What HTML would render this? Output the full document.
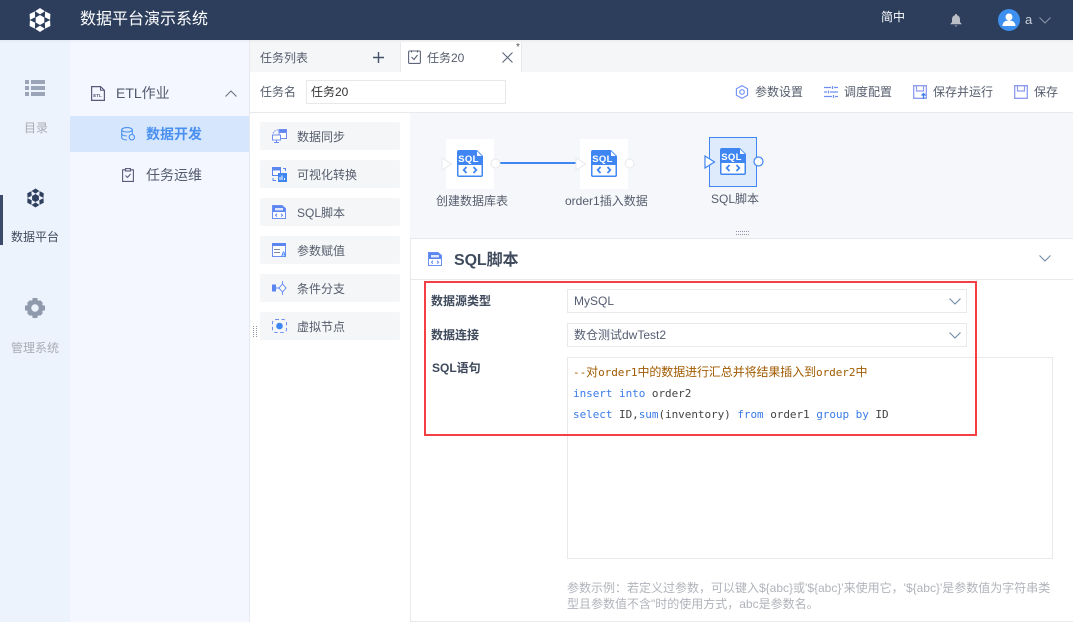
<!DOCTYPE html>
<html lang="zh-CN"><head><meta charset="utf-8"><title>数据平台演示系统</title>
<style>
*{box-sizing:border-box}
html,body{margin:0;padding:0}
body{width:1073px;height:622px;overflow:hidden;position:relative;background:#fff;font:12px "Liberation Sans","Noto Sans CJK SC",sans-serif;color:#555c6c}
.a{position:absolute}
.t{position:absolute;white-space:nowrap;line-height:20px;height:20px}
.item{position:absolute;left:260px;width:140px;height:28px;background:#f5f6f8;border-radius:2px}
.lb{font-weight:bold;color:#3f4a5c}
.sel{position:absolute;left:567px;width:400px;border:1px solid #e8e9eb;background:#fff;color:#555c72;padding-left:6px;line-height:22px}
.code{font-family:"Noto Sans CJK SC",monospace;font-size:12px;line-height:21px;white-space:pre;left:573px;position:absolute;letter-spacing:-.1px}
.code span{font-family:"DejaVu Sans Mono",monospace;font-size:11px;letter-spacing:-.05px}
.c{color:#a05a00}.d span{color:#444}.code span.k{color:#3a7be8}
svg{position:absolute;overflow:visible}
</style></head><body>
<svg width="0" height="0" style="position:absolute"><defs>
<symbol id="sql" viewBox="0 0 26 27">
<path d="M2 0H20L26 6V25a2 2 0 0 1-2 2H2a2 2 0 0 1-2-2V2a2 2 0 0 1 2-2Z" fill="#3f86f2"/>
<path d="M20 1.200V6H24.800Z" fill="#fff"/>
<rect x="1.500" y="15" width="23" height="10.500" fill="#fff"/>
<path d="M9.500 17L6.700 20L9.500 23M16.500 17L19.300 20L16.500 23" fill="none" stroke="#3f86f2" stroke-width="1.800"/>
<text x="11.500" y="12" text-anchor="middle" font-family="Liberation Sans" font-weight="bold" font-size="9.500" letter-spacing=".3" fill="#fff">SQL</text>
</symbol>
<symbol id="sqls" viewBox="0 0 14 14">
<path d="M.5.500H10L13.500 3.500V13.500H.5Z" fill="#fff" stroke="#6b8ff2"/>
<path d="M1 1H10L13 3.500V7H1Z" fill="#5b86f0"/>
<path d="M5 8.800L3.500 10.200L5 11.600M9 8.800L10.500 10.200L9 11.600" fill="none" stroke="#5b86f0"/>
<rect x="3" y="3" width="8" height="2.400" fill="#dfe7fc"/>
</symbol>
<symbol id="logo" viewBox="0 0 24 24">
<path d="M12 0L16.900 3.200L12 6.400L7.100 3.200Z"/>
<path transform="rotate(60 12 12)" d="M12 0L16.900 3.200L12 6.400L7.100 3.200Z"/>
<path transform="rotate(120 12 12)" d="M12 0L16.900 3.200L12 6.400L7.100 3.200Z"/>
<path transform="rotate(180 12 12)" d="M12 0L16.900 3.200L12 6.400L7.100 3.200Z"/>
<path transform="rotate(240 12 12)" d="M12 0L16.900 3.200L12 6.400L7.100 3.200Z"/>
<path transform="rotate(300 12 12)" d="M12 0L16.900 3.200L12 6.400L7.100 3.200Z"/>
<path d="M12 7L16.300 9.500V14.500L12 17L7.700 14.500V9.500Z"/>
</symbol>
<symbol id="chev" viewBox="0 0 12 7"><path d="M.5.500L6 6L11.500.5" fill="none" stroke="currentColor" stroke-width="1.100"/></symbol>
<symbol id="save" viewBox="0 0 14 14"><path d="M.7.700H13.300V13.300H.7Z" fill="#fff" stroke="#8d9bf0" stroke-width="1.300"/><path d="M3.500 1V6H10.500V1" fill="none" stroke="#8d9bf0" stroke-width="1.200"/></symbol>
</defs></svg>

<!-- header -->
<div class="a" style="left:0;top:0;width:1073px;height:40px;background:#2c3e5c"></div>
<svg style="left:28px;top:8px" width="24" height="24" fill="#fff"><use href="#logo"/></svg>
<div class="t" style="left:80px;top:10px;font-size:16px;color:#fff">数据平台演示系统</div>
<div class="t" style="left:881px;top:7px;color:#fff">简中</div>
<svg style="left:950px;top:14px" width="12" height="13" viewBox="0 0 12 13" fill="#b9bec7"><path d="M6 0a1 1 0 0 1 1 1.200C9.300 1.800 10 3.600 10 5.500V8l1.800 2.300H.2L2 8V5.500C2 3.600 2.700 1.800 5 1.200A1 1 0 0 1 6 0ZM4.500 11.500h3L6 12.800Z"/></svg>
<svg style="left:998px;top:9px" width="22" height="22" viewBox="0 0 22 22"><circle cx="11" cy="11" r="11" fill="#3d8ff0"/><circle cx="11" cy="8" r="3.500" fill="#fff"/><path d="M4.500 17c0-4 3-5.500 6.500-5.500S17.500 13 17.500 17Z" fill="#fff"/></svg>
<div class="t" style="left:1025px;top:10px;color:#c8ced8;font-size:13px">a</div>
<svg style="left:1039px;top:17px;color:#8a96a8" width="12" height="7"><use href="#chev"/></svg>

<!-- rail -->
<div class="a" style="left:0;top:40px;width:70px;height:582px;background:#edf3fd"></div>
<div class="a" style="left:70px;top:40px;width:180px;height:582px;background:#f4f7ff;border-right:1px solid #e6e9f0"></div>
<svg style="left:25px;top:80px" width="20" height="16" fill="#9aa5b8"><path d="M0 0h4v4H0ZM6 0h14v4H6ZM0 6h4v4H0ZM6 6h14v4H6ZM0 12h4v4H0ZM6 12h14v4H6Z"/></svg>
<div class="t" style="left:24px;top:118px;color:#a8acb4">目录</div>
<div class="a" style="left:0;top:195px;width:3px;height:50px;background:#3a4a68"></div>
<svg style="left:26px;top:188px" width="19" height="20" fill="#2f3f5e"><use href="#logo"/></svg>
<div class="t" style="left:11px;top:227px;color:#3f4a5c">数据平台</div>
<svg style="left:25px;top:298px" width="20" height="20" viewBox="0 0 20 20"><circle cx="10" cy="10" r="6" fill="none" stroke="#8f9aac" stroke-width="4.500"/><path d="M7.500 0h5v3.500h-5ZM7.500 16.500h5V20h-5ZM0 7.500h3.500v5H0ZM16.500 7.500H20v5h-3.500ZM2 5L5 2 7.500 4.500 4.500 7.500ZM15 2L18 5 15.500 7.500 12.500 4.500ZM2 15L4.500 12.500 7.500 15.500 5 18ZM15.500 12.500L18 15 15 18 12.500 15.500Z" fill="#8f9aac"/></svg>
<div class="t" style="left:11px;top:338px;color:#a8acb4">管理系统</div>

<!-- nav -->
<svg style="left:91px;top:86px" width="14" height="15" viewBox="0 0 14 15"><path d="M.6.600H9.500L13.400 4.300V14.400H.6Z" fill="none" stroke="#5a5a78" stroke-width="1.200"/><path d="M9.500.600V4.300H13.400" fill="none" stroke="#5a5a78"/><text x="2.300" y="11" font-family="Liberation Sans" font-weight="bold" font-size="4.500" fill="#5a5a78">ETL</text></svg>
<div class="t" style="left:116px;top:83px;font-size:14px;color:#515a6e">ETL作业</div>
<svg style="left:225px;top:90px;color:#6e7480" width="12" height="7"><path d="M.5 6.500L6 1L11.500 6.500" fill="none" stroke="currentColor" stroke-width="1.100"/></svg>
<div class="a" style="left:70px;top:116px;width:179px;height:36px;background:#d6e7fd"></div>
<svg style="left:121px;top:127px" width="14" height="14" viewBox="0 0 14 14" fill="none" stroke="#4a90f0" stroke-width="1.100"><ellipse cx="6" cy="2.800" rx="5.300" ry="2.200"/><path d="M.7 2.800V10.500C.7 12 3 13 6 13M.7 6.500C.7 8 3 9 6 9M11.300 2.800V7"/><circle cx="10.800" cy="10.200" r="2.700"/></svg>
<div class="t" style="left:146px;top:124px;font-size:14px;font-weight:bold;color:#4a90f0">数据开发</div>
<svg style="left:122px;top:168px" width="12" height="14" viewBox="0 0 12 14" fill="none" stroke="#5a5a78" stroke-width="1.100"><path d="M3.500 1.800H.6V13.400H11.400V1.800H8.500"/><rect x="3.500" y=".6" width="5" height="2.400"/><path d="M3.500 7.500L5.500 9.500L8.500 6"/></svg>
<div class="t" style="left:146px;top:165px;font-size:14px;color:#515a6e">任务运维</div>

<!-- tab bar -->
<div class="a" style="left:250px;top:40px;width:823px;height:32px;background:#f5f6f8"></div>
<div class="a" style="left:0;top:40px;width:1073px;height:3px;background:linear-gradient(rgba(0,0,0,.04),transparent)"></div>
<div class="t" style="left:260px;top:48px;color:#555c6c">任务列表</div>
<svg style="left:373px;top:52px" width="11" height="11"><path d="M5.500 0V11M0 5.500H11" stroke="#45506a" stroke-width="1.400"/></svg>
<div class="a" style="left:400px;top:42px;width:122px;height:30px;background:#fff;border-left:1px solid #e8e9ec;border-right:1px solid #e8e9ec"></div>
<svg style="left:408px;top:50px" width="13" height="14" viewBox="0 0 13 14" fill="none" stroke="#5c6478" stroke-width="1.100"><rect x=".6" y="1" width="11.800" height="12.400" rx="1"/><path d="M3.500 .3V2.500M9.500 .3V2.500"/><path d="M3.500 7L6 9.500L9.500 5"/></svg>
<div class="t" style="left:427px;top:48px;color:#555c6c">任务20</div>
<svg style="left:502px;top:52px" width="11" height="11"><path d="M.5.500L10.500 10.500M10.500.500L.5 10.500" stroke="#5c6478" stroke-width="1.100"/></svg>
<div class="t" style="left:516px;top:41px;font-size:10px;line-height:14px;color:#555">*</div>

<!-- task name row -->
<div class="t" style="left:260px;top:82px;color:#555c6c">任务名</div>
<div class="a" style="left:306px;top:80px;width:200px;height:24px;border:1px solid #e6e8eb;padding-left:4px;line-height:22px;color:#333">任务20</div>
<svg style="left:735px;top:85px" width="14" height="14" viewBox="0 0 14 14" fill="none" stroke="#6f8ff0" stroke-width="1.100"><path d="M7 .6L12.600 3.800V10.200L7 13.400L1.400 10.200V3.800Z"/><circle cx="7" cy="7" r="2.300"/></svg>
<div class="t" style="left:755px;top:82px">参数设置</div>
<svg style="left:824px;top:85px" width="14" height="14" viewBox="0 0 14 14" fill="none" stroke="#6f8ff0" stroke-width="1.200"><path d="M0 2.500H7M10 2.500H14M0 7H3M6 7H14M0 11.500H8M11 11.500H14M8.500 1V4M4.500 5.500V8.500M9.500 10V13"/></svg>
<div class="t" style="left:844px;top:82px">调度配置</div>
<svg style="left:913px;top:85px" width="14" height="14"><use href="#save"/><path d="M10.500 14V8.500M8.500 10.500L10.500 8.500L12.500 10.500" stroke="#3d7fe8" stroke-width="1.300" fill="none"/></svg>
<div class="t" style="left:933px;top:82px">保存并运行</div>
<svg style="left:1014px;top:85px" width="14" height="14"><use href="#save"/></svg>
<div class="t" style="left:1034px;top:82px">保存</div>
<div class="a" style="left:250px;top:112px;width:823px;height:1px;background:#e8e9ec"></div>

<!-- node list -->
<div class="item" style="top:122px"></div><div class="item" style="top:160px"></div><div class="item" style="top:198px"></div><div class="item" style="top:236px"></div><div class="item" style="top:274px"></div><div class="item" style="top:312px"></div>
<svg style="left:272px;top:129px" width="15" height="14" viewBox="0 0 15 14" fill="none" stroke="#6f8ff0"><rect x="7" y=".5" width="7.500" height="9" fill="#fff"/><rect x="7" y=".5" width="7.500" height="3" fill="#5b86f0"/><rect x=".5" y="6" width="8" height="5" fill="#fff"/><path d="M2 13.500H7M4.500 11V13.500"/><path d="M1 4.500C2 2 4 1 6 1" stroke-dasharray="1.500 1"/></svg>
<div class="t" style="left:297px;top:127px">数据同步</div>
<svg style="left:272px;top:167px" width="15" height="15" viewBox="0 0 15 15"><rect x=".5" y=".5" width="8" height="8" fill="#fff" stroke="#5b86f0"/><rect x="1" y="1" width="7" height="2.500" fill="#5b86f0"/><rect x="6" y="6" width="9" height="9" fill="#3f86f2"/><path d="M8 13V10M10 13V8.500M12.500 13V11" stroke="#fff"/><path d="M11 1.500H13.500V4M1 11V13.500H4" stroke="#5b86f0" fill="none"/></svg>
<div class="t" style="left:297px;top:165px">可视化转换</div>
<svg style="left:272px;top:205px" width="14" height="14"><use href="#sqls"/></svg>
<div class="t" style="left:297px;top:203px">SQL脚本</div>
<svg style="left:272px;top:243px" width="15" height="14" viewBox="0 0 15 14"><rect x=".5" y=".5" width="13" height="13" fill="#fff" stroke="#6f8ff0"/><rect x="0" y="0" width="14" height="3" fill="#5b86f0"/><path d="M2 6.500H8M2 9.500H8" stroke="#7d8aa0"/><text x="9" y="13.500" font-family="Liberation Sans" font-weight="bold" font-size="7" fill="#3f86f2">A</text></svg>
<div class="t" style="left:297px;top:241px">参数赋值</div>
<svg style="left:272px;top:281px" width="15" height="14" viewBox="0 0 15 14"><rect x="0" y="3.500" width="4" height="7" fill="#5b86f0"/><path d="M4 7H7" stroke="#5b86f0"/><path d="M10.500 3L14 7L10.500 11L7 7Z" fill="#fff" stroke="#6f8ff0"/><path d="M10.500 0V3M10.500 11V14" stroke="#6f8ff0"/></svg>
<div class="t" style="left:297px;top:279px">条件分支</div>
<svg style="left:272px;top:319px" width="15" height="14" viewBox="0 0 15 14"><rect x=".5" y=".5" width="14" height="13" rx="3" fill="none" stroke="#6f8ff0" stroke-dasharray="3.500 2.500"/><circle cx="7.500" cy="7" r="3.300" fill="#3f86f2"/></svg>
<div class="t" style="left:297px;top:317px">虚拟节点</div>
<svg style="left:253px;top:326px" width="5" height="11"><path d="M.5 0V11M3.500 0V11" stroke="#8d94a6" stroke-dasharray="1 1"/></svg>

<!-- canvas -->
<div class="a" style="left:410px;top:113px;width:663px;height:125px;background:#f5f7fa"></div>
<div class="a" style="left:446px;top:139px;width:48px;height:50px;background:#fff"></div>
<div class="a" style="left:580px;top:139px;width:48px;height:50px;background:#fff"></div>
<div class="a" style="left:709px;top:137px;width:48px;height:50px;background:#deebfd;border:1px solid #3f86f2"></div>
<div class="a" style="left:500px;top:162px;width:76px;height:2px;background:#3f86f2"></div>
<svg style="left:457px;top:150px" width="26" height="27"><use href="#sql"/></svg>
<svg style="left:591px;top:150px" width="26" height="27"><use href="#sql"/></svg>
<svg style="left:720px;top:148px" width="26" height="27"><use href="#sql"/></svg>
<svg style="left:441px;top:157px" width="12" height="14"><path d="M1 1L10.500 7L1 13Z" fill="#fff" stroke="#e6e8ec"/></svg>
<svg style="left:575px;top:157px" width="12" height="14"><path d="M1 1L10.500 7L1 13Z" fill="#fff" stroke="#e6e8ec"/></svg>
<svg style="left:704px;top:155px" width="12" height="14"><path d="M1 1L10.500 7L1 13Z" fill="#fff" stroke="#3f86f2" stroke-width="1.200"/></svg>
<svg style="left:490px;top:158px" width="11" height="11"><circle cx="5.500" cy="5.500" r="4.500" fill="#fff" stroke="#e6e8ec"/></svg>
<svg style="left:624px;top:158px" width="11" height="11"><circle cx="5.500" cy="5.500" r="4.500" fill="#fff" stroke="#e6e8ec"/></svg>
<svg style="left:753px;top:156px" width="11" height="11"><circle cx="5.500" cy="5.500" r="4.500" fill="#fff" stroke="#3f86f2" stroke-width="1.200"/></svg>
<div class="t" style="left:436px;top:191px">创建数据库表</div>
<div class="t" style="left:565px;top:191px">order1插入数据</div>
<div class="t" style="left:711px;top:189px">SQL脚本</div>
<svg style="left:736px;top:231px" width="13" height="4"><path d="M0 .5H13M0 3.500H13" stroke="#8d94a6" stroke-dasharray="1 1"/></svg>

<!-- panel -->
<div class="a" style="left:410px;top:238px;width:663px;height:384px;background:#fff;border-left:1px solid #e8e9ec;border-top:1px solid #e8e9ec;border-bottom:1px solid #e8e9ec"></div>
<div class="a" style="left:411px;top:279px;width:662px;height:1px;background:#e8e9ec"></div>
<svg style="left:428px;top:252px" width="14" height="14"><use href="#sqls"/></svg>
<div class="t" style="left:454px;top:251px;font-size:16px;font-weight:bold;color:#3f4a5c;letter-spacing:-.1px">SQL脚本</div>
<svg style="left:1039px;top:255px;color:#6f8aa8" width="12" height="7"><use href="#chev"/></svg>

<div class="t lb" style="left:431px;top:291px">数据源类型</div>
<div class="t lb" style="left:431px;top:325px">数据连接</div>
<div class="t lb" style="left:432px;top:358px">SQL语句</div>
<div class="sel" style="top:289px;height:24px">MySQL</div>
<div class="sel" style="top:323px;height:24px">数仓测试dwTest2</div>
<svg style="left:949px;top:298px;color:#6f8aa8" width="12" height="7"><use href="#chev"/></svg>
<svg style="left:949px;top:332px;color:#6f8aa8" width="12" height="7"><use href="#chev"/></svg>
<div class="a" style="left:567px;top:357px;width:486px;height:202px;border:1px solid #e8e9eb"></div>
<div class="code c" style="top:361px"><span>--</span>对<span>order1</span>中的数据进行汇总并将结果插入到<span>order2</span>中</div>
<div class="code d" style="top:382px"><span class="k">insert into</span><span> order2</span></div>
<div class="code d" style="top:403px"><span class="k">select</span><span> ID,</span><span class="k">sum</span><span>(inventory) </span><span class="k">from</span><span> order1 </span><span class="k">group by</span><span> ID</span></div>
<div class="a" style="left:424px;top:281px;width:553px;height:155px;border:2px solid #f44045"></div>
<div class="t" style="left:567px;top:578px;color:#b0b3ba">参数示例：若定义过参数，可以键入${abc}或'${abc}'来使用它，'${abc}'是参数值为字符串类</div>
<div class="t" style="left:567px;top:594px;color:#b0b3ba">型且参数值不含"时的使用方式，abc是参数名。</div>
</body></html>
